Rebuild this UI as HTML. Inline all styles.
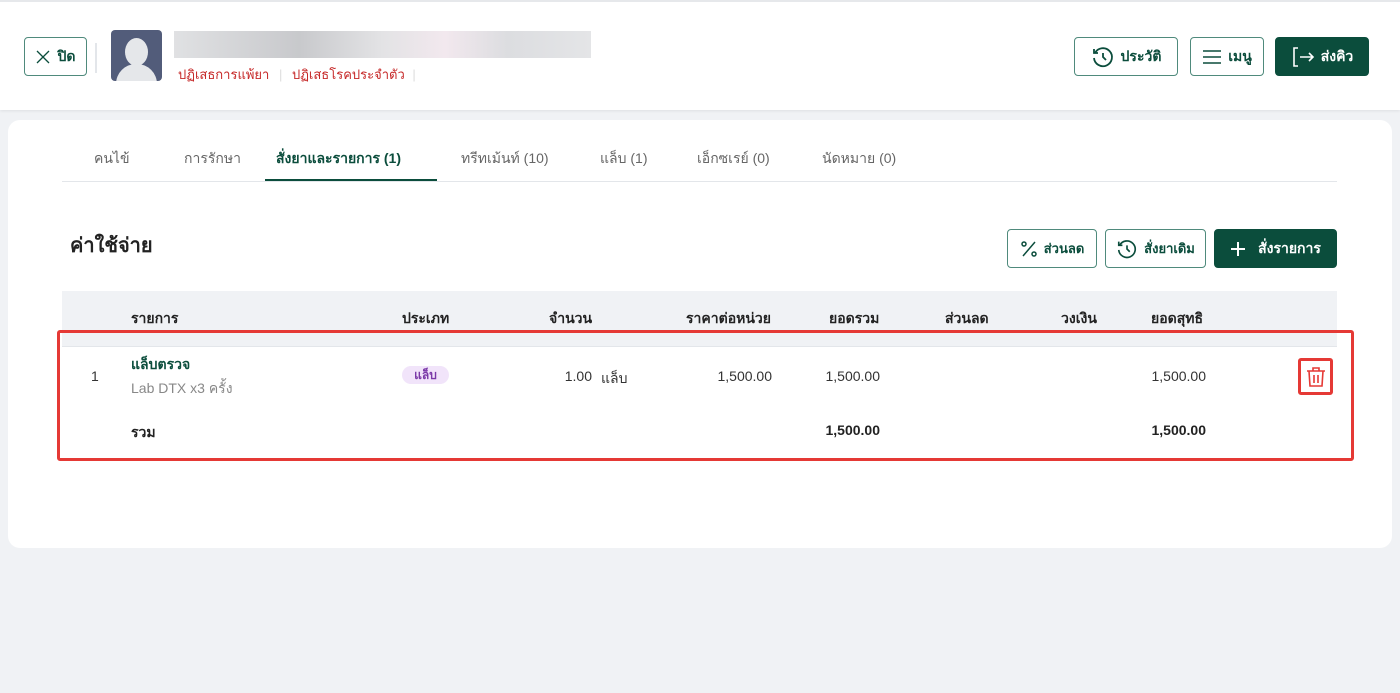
<!DOCTYPE html>
<html><head><meta charset="utf-8"><style>
*{box-sizing:border-box;margin:0;padding:0}
body{width:1400px;height:693px;background:#f0f2f5;font-family:"Liberation Sans","DejaVu Sans",sans-serif;position:relative;overflow:hidden;color:#222}
.abs{position:absolute}
.hdr{left:0;top:0;width:1400px;height:110px;background:#fff;border-top:2px solid #e6e8eb;box-shadow:0 1px 3px rgba(0,0,0,.08)}
.btn{position:absolute;border:1.5px solid #4f8a7c;border-radius:4px;background:#fff;color:#0b4d3c;font-size:14px;font-weight:bold;display:flex;align-items:center;justify-content:center;gap:6px}
.btn.dark{background:#0b4d3c;border-color:#0b4d3c;color:#fff}
.card{left:8px;top:120px;width:1384px;height:428px;background:#fff;border-radius:12px}
.tab{position:absolute;top:148px;font-size:14px;color:#666}
.th{position:absolute;top:308px;font-size:14px;font-weight:bold;color:#222}
.td{position:absolute;font-size:14px;color:#333}
.r{text-align:right;width:120px}
</style></head><body>
<div class="abs hdr"></div>
<div class="btn" style="left:24px;top:37px;width:63px;height:39px;gap:8px"><svg width="14" height="14" viewBox="0 0 14 14" stroke="#0b4d3c" stroke-width="1.3"><path d="M1 1l12 12M13 1L1 13"/></svg>ปิด</div>
<div class="abs" style="left:95px;top:43px;width:2px;height:30px;background:#e3e6ea"></div>
<div class="abs" style="left:111px;top:30px;width:51px;height:51px;background:#525c7a;border-radius:4px;overflow:hidden">
<div class="abs" style="left:14px;top:8px;width:23px;height:28px;background:#e5e7ea;border-radius:50%"></div>
<div class="abs" style="left:5px;top:34px;width:41px;height:30px;background:#e5e7ea;border-radius:20px 20px 0 0"></div></div>
<div class="abs" style="left:174px;top:31px;width:417px;height:27px;background:linear-gradient(90deg,#e0e1e3,#c8c9cc 30%,#e3e3e5 50%,#f2e8ee 65%,#dcdde0 80%,#e4e5e7)"></div>
<div class="abs" style="left:178px;top:64px;font-size:13px;color:#c62828">ปฏิเสธการแพ้ยา <span style="color:#ddd;margin:0 6px">|</span> ปฏิเสธโรคประจำตัว <span style="color:#ddd;margin-left:4px">|</span></div>
<div class="btn" style="left:1074px;top:37px;width:104px;height:39px">
<svg width="24" height="24" viewBox="0 0 24 24" fill="none" stroke="#0b4d3c" stroke-width="1.8"><path d="M4 8a9 9 0 1 1-1 5"/><path d="M3 4v4h4"/><path d="M12 8v4l3 3"/></svg>ประวัติ</div>
<div class="btn" style="left:1190px;top:37px;width:74px;height:39px">
<svg width="20" height="16" viewBox="0 0 20 16" stroke="#0b4d3c" stroke-width="1.6"><path d="M1 2h18M1 8h18M1 14h18"/></svg>เมนู</div>
<div class="btn dark" style="left:1275px;top:37px;width:94px;height:39px">
<svg width="24" height="22" viewBox="0 0 24 22" fill="none" stroke="#fff" stroke-width="1.6"><path d="M7 2H3v18h4"/><path d="M9 11h13M18 7l4 4-4 4"/></svg>ส่งคิว</div>

<div class="abs card"></div>
<div class="tab" style="left:94px">คนไข้</div>
<div class="tab" style="left:184px">การรักษา</div>
<div class="tab" style="left:276px;color:#0b4d3c;font-weight:bold">สั่งยาและรายการ (1)</div>
<div class="tab" style="left:461px">ทรีทเม้นท์ (10)</div>
<div class="tab" style="left:600px">แล็บ (1)</div>
<div class="tab" style="left:697px">เอ็กซเรย์ (0)</div>
<div class="tab" style="left:822px">นัดหมาย (0)</div>
<div class="abs" style="left:62px;top:181px;width:1275px;height:1px;background:#e3e6ea"></div>
<div class="abs" style="left:265px;top:179px;width:172px;height:2px;background:#0b4d3c"></div>

<div class="abs" style="left:70px;top:229px;font-size:20px;font-weight:bold;color:#222">ค่าใช้จ่าย</div>
<div class="btn" style="left:1007px;top:229px;width:90px;height:39px;font-size:13px">
<svg width="18" height="18" viewBox="0 0 18 18" fill="none" stroke="#0b4d3c" stroke-width="1.5"><path d="M15 2L3 16"/><circle cx="4" cy="4" r="2"/><circle cx="14" cy="14" r="2"/></svg>ส่วนลด</div>
<div class="btn" style="left:1105px;top:229px;width:101px;height:39px;font-size:13px">
<svg width="22" height="22" viewBox="0 0 24 24" fill="none" stroke="#0b4d3c" stroke-width="1.8"><path d="M4 8a9 9 0 1 1-1 5"/><path d="M3 4v4h4"/><path d="M12 8v4l3 3"/></svg>สั่งยาเดิม</div>
<div class="btn dark" style="left:1214px;top:229px;width:123px;height:39px;gap:12px">
<svg width="16" height="16" viewBox="0 0 16 16" stroke="#fff" stroke-width="2"><path d="M8 1v14M1 8h14"/></svg>สั่งรายการ</div>

<div class="abs" style="left:62px;top:291px;width:1275px;height:56px;background:#f0f2f5;border-bottom:1px solid #e3e6ea"></div>
<div class="th" style="left:131px">รายการ</div>
<div class="th" style="left:402px">ประเภท</div>
<div class="th" style="left:549px">จำนวน</div>
<div class="th" style="left:686px">ราคาต่อหน่วย</div>
<div class="th" style="left:829px">ยอดรวม</div>
<div class="th" style="left:945px">ส่วนลด</div>
<div class="th" style="left:1061px">วงเงิน</div>
<div class="th" style="left:1151px">ยอดสุทธิ</div>

<div class="td" style="left:91px;top:368px">1</div>
<div class="td" style="left:131px;top:354px;font-weight:bold;color:#0b4d3c">แล็บตรวจ</div>
<div class="td" style="left:131px;top:378px;color:#888">Lab DTX x3 ครั้ง</div>
<div class="abs" style="left:402px;top:366px;width:47px;height:18px;background:#f1e4fa;color:#7b3aa8;border-radius:9px;font-size:12px;font-weight:bold;text-align:center;line-height:18px">แล็บ</div>
<div class="td r" style="left:472px;top:368px">1.00</div>
<div class="td" style="left:601px;top:368px">แล็บ</div>
<div class="td r" style="left:652px;top:368px">1,500.00</div>
<div class="td r" style="left:760px;top:368px">1,500.00</div>
<div class="td r" style="left:1086px;top:368px">1,500.00</div>
<div class="abs" style="left:1298px;top:358px;width:35px;height:37px;border:3px solid #e53935;border-radius:3px;display:flex;align-items:center;justify-content:center">
<svg width="20" height="22" viewBox="0 0 20 22" fill="none" stroke="#e53935" stroke-width="1.6"><path d="M1 5h18M7 5V2h6v3M3 5l1 15h12l1-15M8 9v8M12 9v8"/></svg></div>
<div class="td" style="left:131px;top:422px;font-weight:bold;color:#222">รวม</div>
<div class="td r" style="left:760px;top:422px;font-weight:bold;color:#222">1,500.00</div>
<div class="td r" style="left:1086px;top:422px;font-weight:bold;color:#222">1,500.00</div>
<div class="abs" style="left:57px;top:330px;width:1297px;height:131px;border:3px solid #e53935;border-radius:3px"></div>
</body></html>
